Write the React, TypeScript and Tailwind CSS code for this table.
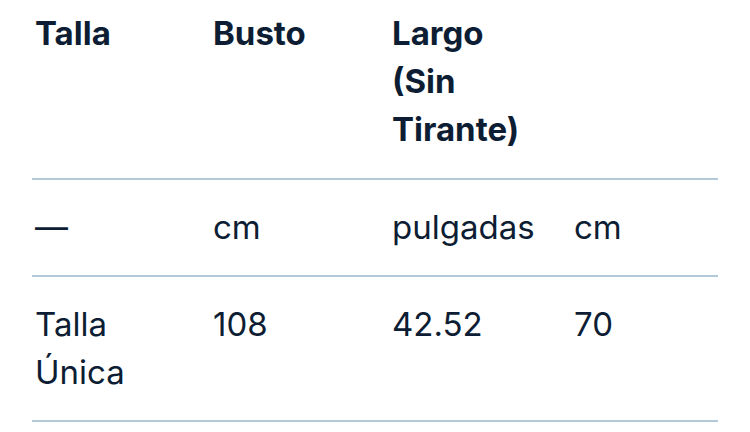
import React from "react";

const rows = [
  ["—", "cm", "pulgadas", "cm"],
  ["Talla Única", "108", "42.52", "70"],
];

const App = () => {
  return (
    <div className="min-h-screen w-[750px] h-[432px] overflow-hidden bg-white font-['Inter',sans-serif] text-[#0d1d33]">
      <div className="ml-[32px] w-[686px]">
        {/* Header */}
        <div className="grid grid-cols-[178px_179px_182px_1fr] border-b-2 border-[#b2c9da] pt-[9px] pb-[25px] text-[33px] leading-[48px] font-bold">
          <div className="pl-[3px]">Talla</div>
          <div className="pl-[3px]">Busto</div>
          <div className="pl-[3px] max-w-[145px]">Largo (Sin Tirante)</div>
          <div />
        </div>

        {/* Rows */}
        {rows.map((row, i) => (
          <div
            key={i}
            className="grid grid-cols-[178px_179px_182px_1fr] border-b-2 border-[#b2c9da] pt-[23px] pb-[24px] text-[33px] leading-[48px]"
          >
            {row.map((cell, j) => (
              <div key={j} className={j === 0 ? "pl-[3px] max-w-[130px]" : "pl-[3px]"}>
                {cell}
              </div>
            ))}
          </div>
        ))}
      </div>
    </div>
  );
};

export default App;
